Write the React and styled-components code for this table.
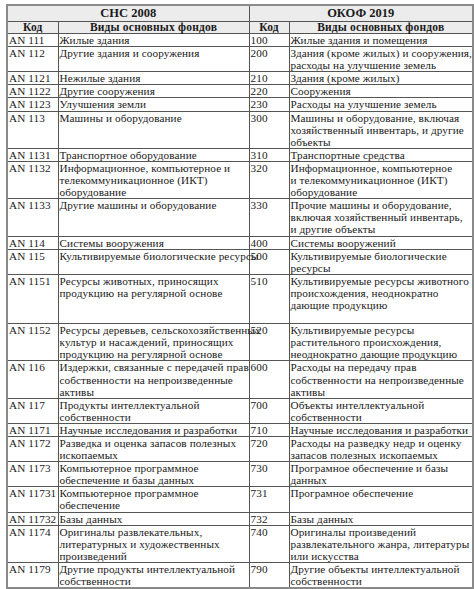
import React from "react";
import styled, { createGlobalStyle } from "styled-components";

const Global = createGlobalStyle`
  html, body { margin: 0; padding: 0; background: #fff; }
  body { font-family: "Liberation Serif", "Times New Roman", serif; color: #1a1a1a; }
`;

const Page = styled.div`
  padding: 4px 2px 0 6px;
`;

const Table = styled.table`
  border-collapse: collapse;
  table-layout: fixed;
  width: 466px;
  border: 2px solid #8a8a8a;
  font-size: 11.2px;
  line-height: 12.1px;
  letter-spacing: 0.1px;
`;

const Col = styled.col``;

const HeadCell = styled.th`
  background: #ececec;
  border: 1px solid #555;
  font-weight: bold;
  text-align: center;
  padding: 0;
  font-size: ${(p) => (p.$big ? "12.5px" : "11.5px")};
  line-height: ${(p) => (p.$big ? "15px" : "11px")};
  letter-spacing: ${(p) => (p.$big ? "0" : "0.2px")};
`;

const Cell = styled.td`
  border: 1px solid #555;
  vertical-align: top;
  padding: 0 0 0 1px;
  white-space: nowrap;
  overflow: visible;
`;

const Line = styled.div`
  white-space: nowrap;
  min-height: 12.1px;
`;

const rows = [
  ["AN 111", ["Жилые здания"], "100", ["Жилые здания и помещения"]],
  ["AN 112", ["Другие здания и сооружения"], "200", ["Здания (кроме жилых) и сооружения,", "расходы на улучшение земель"]],
  ["AN 1121", ["Нежилые здания"], "210", ["Здания (кроме жилых)"]],
  ["AN 1122", ["Другие сооружения"], "220", ["Сооружения"]],
  ["AN 1123", ["Улучшения земли"], "230", ["Расходы на улучшение земель"]],
  ["AN 113", ["Машины и оборудование"], "300", ["Машины и оборудование, включая", "хозяйственный инвентарь, и другие", "объекты"]],
  ["AN 1131", ["Транспортное оборудование"], "310", ["Транспортные средства"]],
  ["AN 1132", ["Информационное, компьютерное и", "телекоммуникационное (ИКТ)", "оборудование"], "320", ["Информационное, компьютерное", "и телекоммуникационное (ИКТ)", "оборудование"]],
  ["AN 1133", ["Другие машины и оборудование"], "330", ["Прочие машины и оборудование,", "включая хозяйственный инвентарь,", "и другие объекты"]],
  ["AN 114", ["Системы вооружения"], "400", ["Системы вооружений"]],
  ["AN 115", ["Культивируемые биологические ресурсы"], "500", ["Культивируемые биологические", "ресурсы"]],
  ["AN 1151", ["Ресурсы животных, приносящих", "продукцию на регулярной основе", "", ""], "510", ["Культивируемые ресурсы животного", "происхождения, неоднократно", "дающие продукцию"]],
  ["AN 1152", ["Ресурсы деревьев, сельскохозяйственных", "культур и насаждений, приносящих", "продукцию на регулярной основе"], "520", ["Культивируемые ресурсы", "растительного происхождения,", "неоднократно дающие продукцию"]],
  ["AN 116", ["Издержки, связанные с передачей прав", "собственности на непроизведенные", "активы"], "600", ["Расходы на передачу прав", "собственности на непроизведенные", "активы"]],
  ["AN 117", ["Продукты интеллектуальной", "собственности"], "700", ["Объекты интеллектуальной", "собственности"]],
  ["AN 1171", ["Научные исследования и разработки"], "710", ["Научные исследования и разработки"]],
  ["AN 1172", ["Разведка и оценка запасов полезных", "ископаемых"], "720", ["Расходы на разведку недр и оценку", "запасов полезных ископаемых"]],
  ["AN 1173", ["Компьютерное программное", "обеспечение и базы данных"], "730", ["Програмное обеспечение и базы", "данных"]],
  ["AN 11731", ["Компьютерное программное", "обеспечение"], "731", ["Програмное обеспечение"]],
  ["AN 11732", ["Базы данных"], "732", ["Базы данных"]],
  ["AN 1174", ["Оригиналы развлекательных,", "литературных и художественных", "произведений"], "740", ["Оригиналы произведений", "развлекательного жанра, литературы", "или искусства"]],
  ["AN 1179", ["Другие продукты интеллектуальной", "собственности"], "790", ["Другие объекты интеллектуальной", "собственности"]],
];

const Lines = ({ items }) => items.map((t, i) => <Line key={i}>{t}</Line>);

export default function App() {
  return (
    <Page>
      <Global />
      <Table>
        <colgroup>
          <Col style={{ width: 51 }} />
          <Col style={{ width: 191 }} />
          <Col style={{ width: 40 }} />
          <Col style={{ width: 184 }} />
        </colgroup>
        <thead>
          <tr>
            <HeadCell $big colSpan={2}>СНС 2008</HeadCell>
            <HeadCell $big colSpan={2}>ОКОФ 2019</HeadCell>
          </tr>
          <tr>
            <HeadCell>Код</HeadCell>
            <HeadCell>Виды основных фондов</HeadCell>
            <HeadCell>Код</HeadCell>
            <HeadCell>Виды основных фондов</HeadCell>
          </tr>
        </thead>
        <tbody>
          {rows.map((r) => (
            <tr key={r[0]}>
              <Cell>{r[0]}</Cell>
              <Cell><Lines items={r[1]} /></Cell>
              <Cell>{r[2]}</Cell>
              <Cell><Lines items={r[3]} /></Cell>
            </tr>
          ))}
        </tbody>
      </Table>
    </Page>
  );
}
